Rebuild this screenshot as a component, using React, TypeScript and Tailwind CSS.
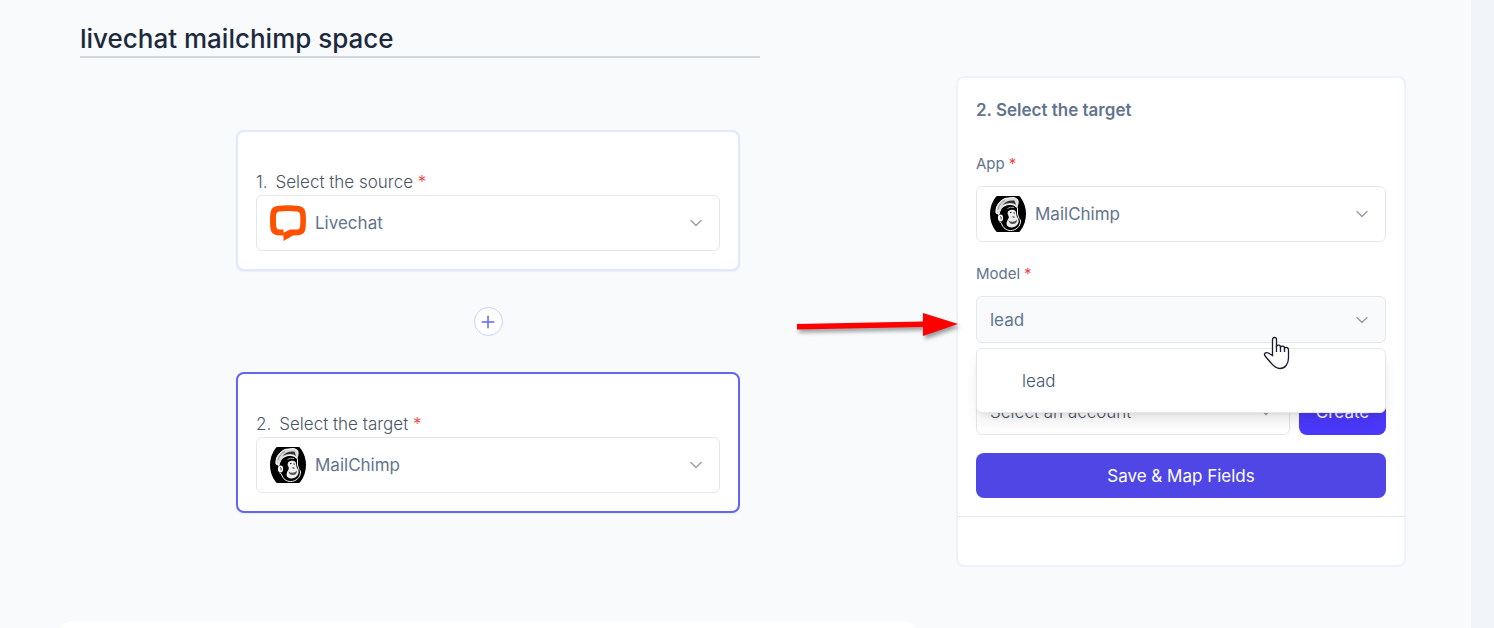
import { useState, type ReactNode } from "react";
import { ChevronDown, Plus } from "lucide-react";

function LivechatLogo() {
  return (
    <svg viewBox="0 0 36 36" className="w-9 h-9" aria-hidden="true">
      <path
        fill="#ff5100"
        fillRule="evenodd"
        d="M7 1Q18-.6 29 1Q35 2 35.600 8Q36.300 15 35.600 23Q35 29.500 28.500 30.200L23 30.500L13.500 36V30.500L7 30.200Q1 29.500.4 23Q-.3 15 .4 8Q1 2 7 1ZM9 6.400Q6.500 6.800 6.200 9.300Q5.600 15 6.200 21.500Q6.500 24.300 9 24.600H13.500V27.800L20 24.600L27.500 24.600Q29.800 24.300 30.100 21.500Q30.600 15 30.100 9.300Q29.800 6.800 27.300 6.400Q18 5.500 9 6.400Z"
      />
    </svg>
  );
}

function MailchimpLogo() {
  return (
    <svg viewBox="0 0 36 36" className="w-9 h-9" aria-hidden="true">
      <ellipse cx="18" cy="18" rx="18" ry="23" fill="#000" />
      {/* head outline */}
      <path
        d="M9.500 26Q11 26 11.500 27.500C13 32 16.500 34.500 20.500 34.500C26 34.500 30.500 30.500 30.500 25Q30.500 23.500 29 22.500L27.500 18V11.500"
        fill="none"
        stroke="#fff"
        strokeWidth="1"
      />
      {/* cap */}
      <path
        d="M6 17C5.500 11.500 8 6.500 13 3.500C15 1.800 17.500 2.200 19 2C22.500.8 26.500 1.500 27.800 4C28.500 6 28 9 26.800 11.500C24.500 8.500 20 7.800 16.500 9C12 10.500 10 13.500 9 18.500Z"
        fill="#dcdcdc"
        stroke="#fff"
        strokeWidth="1"
      />
      <path
        d="M12.500 9.500C14.500 6 18.500 4 24.500 4.500L26 9C23.500 6.500 18 6 12.500 9.500Z"
        fill="#333"
      />
      <path d="M8 13.500C9 9 11.500 6 15 4.500" fill="none" stroke="#777" strokeWidth=".8" />
      {/* ear */}
      <ellipse cx="10.500" cy="22" rx="2.600" ry="3.400" fill="#fff" />
      <path d="M10 20.500Q12 20.500 11 23.500" fill="none" stroke="#333" strokeWidth=".9" />
      {/* brow */}
      <path d="M17.500 12.500Q20 10.500 24 11.500" fill="none" stroke="#bbb" strokeWidth=".9" />
      {/* face and muzzle */}
      <path
        d="M18 15.500C20 13 25 13.500 25.800 15.500C26.500 18 26 20 28 22.500C30 26 27 31 22 31.500C17.500 31.500 15.500 29 17 25.500C17.500 23.500 19.500 22.500 18.500 20Q17 17.500 18 15.500Z"
        fill="#eee"
      />
      <path
        d="M20 16.800L21.500 16.300M23.500 16.800L24.800 17.200M22.500 20.800L24.500 21.200"
        fill="none"
        stroke="#222"
        strokeWidth="1.100"
      />
      <path d="M18.500 24.500C21 26.500 25 26 27 23.500Q27 28 22.500 28Q19.500 28 18.500 24.500Z" fill="#555" />
    </svg>
  );
}

interface FieldSelectProps {
  id: string;
  options: string[];
  icon?: ReactNode;
  className?: string;
}

function FieldSelect({ id, options, icon, className = "bg-white text-slate-500" }: FieldSelectProps) {
  const [value, setValue] = useState(options[0]);

  return (
    <div className="relative">
      {icon && (
        <span className="absolute inset-y-0 left-3.5 flex items-center pointer-events-none">
          {icon}
        </span>
      )}
      <select
        id={id}
        value={value}
        onChange={(e) => setValue(e.target.value)}
        className={`block w-full appearance-none rounded-md border border-gray-200 pt-0.5 pr-10 text-[17px] outline-none ${
          icon ? "h-14 pl-[58px]" : "h-[47px] pl-[13px]"
        } ${className}`}
      >
        {options.map((o) => (
          <option key={o}>{o}</option>
        ))}
      </select>
      <span className="absolute inset-y-0 right-3.5 flex items-center pointer-events-none">
        <ChevronDown size={20} strokeWidth={1.8} className="text-gray-400" />
      </span>
    </div>
  );
}

interface StepCardProps {
  id: string;
  step: string;
  title: string;
  app: string;
  icon: ReactNode;
  className: string;
}

function StepCard({ id, step, title, app, icon, className }: StepCardProps) {
  return (
    <div
      className={`w-full max-w-[504px] rounded-lg border-2 bg-white px-[18px] pt-9 pb-[18px] shadow-xs ${className}`}
    >
      <label
        htmlFor={id}
        className="flex h-[27px] items-center gap-2 pt-0.5 text-[17px] font-light text-gray-600"
      >
        <span>{step}</span>
        <span>
          {title} <span className="text-[#ef4444]">*</span>
        </span>
      </label>
      <FieldSelect id={id} options={[app]} icon={icon} />
    </div>
  );
}

function PanelLabel({ htmlFor, children }: { htmlFor: string; children: ReactNode }) {
  return (
    <label
      htmlFor={htmlFor}
      className="flex h-[27px] items-center gap-1 pt-0.5 text-[15px] text-slate-500"
    >
      {children} <span className="text-[#ef4444]">*</span>
    </label>
  );
}

function PointerArrow() {
  return (
    <svg
      width="172"
      height="36"
      viewBox="0 0 172 36"
      className="absolute top-[234px] -left-[163px] pointer-events-none drop-shadow-[2px_3px_2px_rgba(0,0,0,0.4)]"
      aria-hidden="true"
    >
      <path d="M2 12L128 9.500V1L163 12L128 24V15L2 17.500Z" fill="#fe0000" />
    </svg>
  );
}

function HandCursor() {
  return (
    <svg
      width="27"
      height="34"
      viewBox="0 0 27 34"
      className="absolute top-[258px] left-[305px] z-20 pointer-events-none"
      aria-hidden="true"
    >
      <path
        d="M9.500 19.500V3.500C9.500.8 13.500.8 13.500 3.500V10C15 8.500 17.500 9 17.500 11C19 9.500 21.500 10 21.500 12C23.500 10.800 25.500 11.500 25.500 14V22C25.500 28 22 32.500 17 32.500C12.500 32.500 10.500 30 8 27L2.500 20.500C0 17.500 2.500 16 5.500 17Z"
        fill="#fff"
        stroke="#1c1b30"
        strokeWidth="1.300"
      />
      <path d="M13.500 9V16M17.500 11V16M21.500 12V16" fill="none" stroke="#1c1b30" strokeWidth="1.300" />
    </svg>
  );
}

function TargetPanel() {
  return (
    <aside className="relative mt-[76px] w-[450px] shrink-0 self-start rounded-lg border-2 border-indigo-50 bg-white">
      <div className="p-[18px]">
        <h2 className="flex h-[27px] items-center pt-0.5 text-[17px] font-semibold text-slate-500">
          2. Select the target
        </h2>

        <div className="mt-[27px] flex flex-col gap-[9px]">
          <PanelLabel htmlFor="app">App</PanelLabel>
          <FieldSelect id="app" options={["MailChimp"]} icon={<MailchimpLogo />} />
        </div>

        <div className="relative mt-[18px] flex flex-col gap-[9px]">
          <PanelLabel htmlFor="model">Model</PanelLabel>
          <FieldSelect id="model" options={["lead"]} className="bg-slate-50 text-slate-500" />
          <ul
            role="listbox"
            aria-label="Model"
            className="absolute inset-x-0 top-full z-10 mt-[5px] rounded-md border border-gray-200 bg-white py-[9px] shadow-lg"
          >
            <li
              role="option"
              aria-selected="false"
              className="flex h-[45px] items-center px-[45px] pt-0.5 text-[17px] font-light text-slate-600"
            >
              lead
            </li>
          </ul>
        </div>

        <div className="mt-[45px] flex gap-[9px]">
          <div className="flex-1">
            <FieldSelect
              id="account"
              options={["Select an account"]}
              className="bg-white font-light text-gray-600"
            />
          </div>
          <button
            type="button"
            className="w-[87px] rounded-lg bg-[#4b39fb] pt-0.5 text-[17px] text-white"
          >
            Create
          </button>
        </div>

        <button
          type="button"
          className="mt-[18px] h-[45px] w-full rounded-lg bg-[#4f46e5] pt-0.5 text-[17px] text-white"
        >
          Save &amp; Map Fields
        </button>
      </div>
      <div className="h-[49px] border-t border-gray-200" />

      <PointerArrow />
      <HandCursor />
    </aside>
  );
}

export default function App() {
  const [name, setName] = useState("livechat mailchimp space");

  return (
    <div className="h-screen overflow-hidden bg-slate-100 pr-[23px] font-['Inter','Liberation_Sans',sans-serif]">
      <main className="flex h-full justify-between gap-9 bg-slate-50 pr-[65px] pl-14">
        <div className="flex max-w-[864px] flex-1 flex-col">
          <div className="px-6 pt-[18px]">
            <input
              type="text"
              aria-label="Space name"
              value={name}
              onChange={(e) => setName(e.target.value)}
              className="block h-10 w-5/6 border-b-2 border-gray-300 bg-transparent pt-0.5 text-[26px] font-medium text-slate-800 outline-none"
            />
          </div>

          <div className="mt-[72px] flex flex-col items-center gap-9 px-6">
            <StepCard
              id="source"
              step="1."
              title="Select the source"
              app="Livechat"
              icon={<LivechatLogo />}
              className="border-indigo-100"
            />
            <button
              type="button"
              aria-label="Add step"
              className="flex size-[29px] items-center justify-center rounded-full border border-indigo-200 bg-white text-[#6366f1]"
            >
              <Plus size={20} strokeWidth={1.8} />
            </button>
            <StepCard
              id="target"
              step="2."
              title="Select the target"
              app="MailChimp"
              icon={<MailchimpLogo />}
              className="border-[#6366f1]"
            />
          </div>

          <div className="mt-[108px] h-40 shrink-0 rounded-[18px] bg-white" />
        </div>

        <TargetPanel />
      </main>
    </div>
  );
}
